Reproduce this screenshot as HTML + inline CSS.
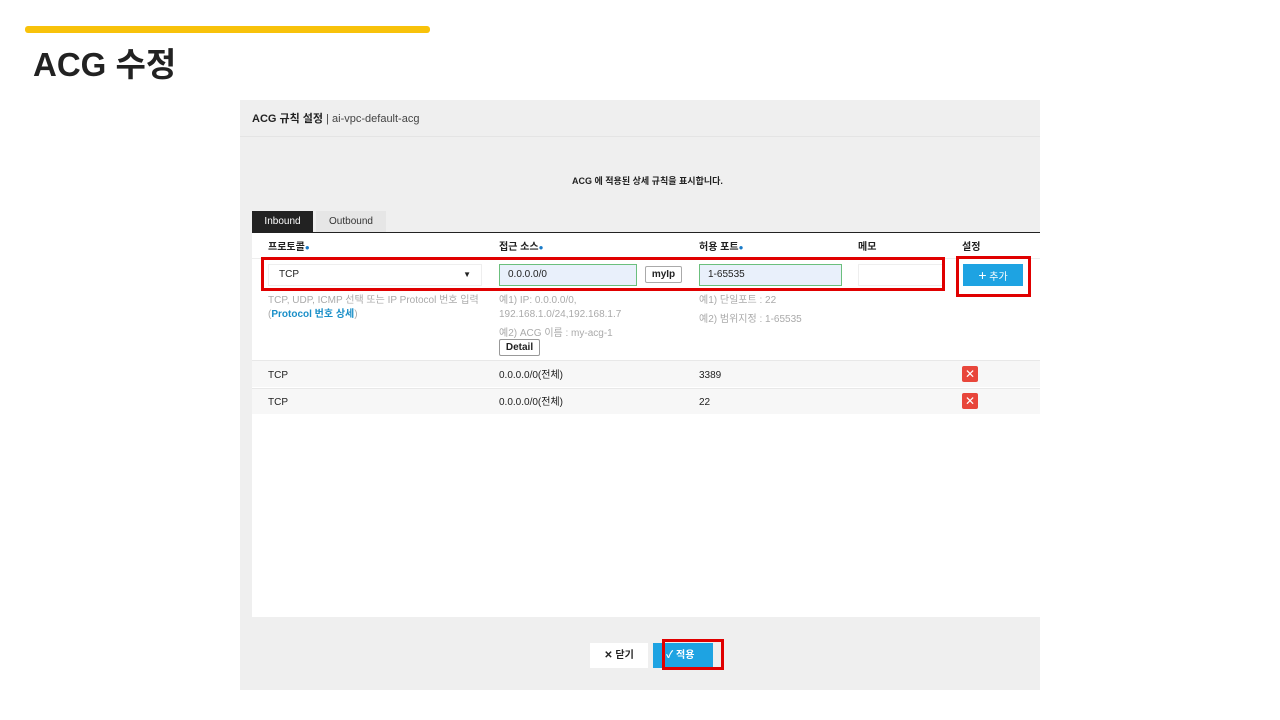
<!DOCTYPE html>
<html><head><meta charset="utf-8"><style>
*{margin:0;padding:0;box-sizing:border-box}
body{width:1280px;height:720px;background:#fff;position:relative;overflow:hidden;font-family:"Liberation Sans","Noto Sans CJK KR",sans-serif;color:#222}
.a{position:absolute}
.t{font-size:10px;white-space:nowrap;line-height:16px}
.g{color:#aaa;font-size:10px;white-space:nowrap;line-height:16px}
.s{transform:translateY(3px)}
.red{border:3px solid #e00000}
.inp{background:#e9f0fb;border:1px solid #6bbf7d;font-size:10px;padding-left:8px;line-height:20px}
.x{width:16px;height:16px;background:#e8463b;border-radius:2px;color:#fff;font-size:12px;line-height:16px;text-align:center}
.dot{color:#1a7bc8;font-size:8px;vertical-align:top}
</style></head><body>
<div class="a" style="left:25px;top:26px;width:405px;height:7px;background:#f8c20a;border-radius:3px"></div>
<div class="a" style="left:33px;top:45px;font-size:33px;font-weight:bold;line-height:40px">ACG 수정</div>

<div class="a" style="left:240px;top:100px;width:800px;height:590px;background:#efefef"></div>
<div class="a" style="left:240px;top:136px;width:800px;height:1px;background:#e4e4e4"></div>
<div class="a t s" style="left:252px;top:108px;font-size:11px"><b>ACG 규칙 설정</b> <span style="color:#444">| ai-vpc-default-acg</span></div>
<div class="a t s" style="left:572px;top:170px;font-weight:bold;font-size:9px">ACG 에 적용된 상세 규칙을 표시합니다.</div>

<div class="a t" style="left:252px;top:211px;width:61px;height:22px;background:#222;color:#fff;text-align:center;line-height:21px">Inbound</div>
<div class="a t" style="left:316px;top:211px;width:70px;height:22px;background:#e6e6e6;color:#333;text-align:center;line-height:21px">Outbound</div>
<div class="a" style="left:252px;top:232px;width:788px;height:385px;background:#fff;border-top:1px solid #222"></div>

<div class="a t s" style="left:268px;top:237px;font-weight:bold">프로토콜<span class="dot">●</span></div>
<div class="a t s" style="left:499px;top:237px;font-weight:bold">접근 소스<span class="dot">●</span></div>
<div class="a t s" style="left:699px;top:237px;font-weight:bold">허용 포트<span class="dot">●</span></div>
<div class="a t s" style="left:858px;top:237px;font-weight:bold">메모</div>
<div class="a t s" style="left:962px;top:237px;font-weight:bold">설정</div>
<div class="a" style="left:252px;top:258px;width:788px;height:1px;background:#eee"></div>

<div class="a t" style="left:268px;top:264px;width:214px;height:22px;border:1px solid #eee;line-height:20px;padding-left:10px">TCP<span style="position:absolute;right:10px;font-size:8px">▼</span></div>
<div class="a inp" style="left:499px;top:264px;width:138px;height:22px">0.0.0.0/0</div>
<div class="a t" style="left:645px;top:266px;width:37px;height:17px;border:1px solid #aaa;border-radius:2px;text-align:center;line-height:15px;font-weight:bold">myIp</div>
<div class="a inp" style="left:699px;top:264px;width:143px;height:22px">1-65535</div>
<div class="a" style="left:858px;top:264px;width:85px;height:22px;border:1px solid #eee"></div>
<div class="a t" style="left:963px;top:264px;width:60px;height:22px;background:#1ea3e2;color:#fff;text-align:center;line-height:22px"><span style="font-size:14px">+</span> 추가</div>
<div class="a red" style="left:261px;top:257px;width:684px;height:34px"></div>
<div class="a red" style="left:956px;top:256px;width:75px;height:41px"></div>

<div class="a g s" style="left:268px;top:290px">TCP, UDP, ICMP 선택 또는 IP Protocol 번호 입력</div>
<div class="a g s" style="left:268px;top:304px">(<span style="color:#1a8fc8;font-weight:bold">Protocol 번호 상세</span>)</div>
<div class="a g s" style="left:499px;top:290px">예1) IP: 0.0.0.0/0,</div>
<div class="a g s" style="left:499px;top:304px">192.168.1.0/24,192.168.1.7</div>
<div class="a g s" style="left:499px;top:323px">예2) ACG 이름 : my-acg-1</div>
<div class="a t" style="left:499px;top:339px;width:41px;height:17px;border:1px solid #999;border-radius:2px;text-align:center;line-height:15px;font-weight:bold">Detail</div>
<div class="a g s" style="left:699px;top:290px">예1) 단일포트 : 22</div>
<div class="a g s" style="left:699px;top:309px">예2) 범위지정 : 1-65535</div>

<div class="a" style="left:252px;top:360px;width:788px;height:27px;background:#f7f7f7;border-top:1px solid #e8e8e8"></div>
<div class="a" style="left:252px;top:388px;width:788px;height:26px;background:#f7f7f7;border-top:1px solid #e8e8e8"></div>
<div class="a t s" style="left:268px;top:365px">TCP</div>
<div class="a t s" style="left:499px;top:365px">0.0.0.0/0(전체)</div>
<div class="a t s" style="left:699px;top:365px">3389</div>
<div class="a x" style="left:962px;top:366px">✕</div>
<div class="a t s" style="left:268px;top:392px">TCP</div>
<div class="a t s" style="left:499px;top:392px">0.0.0.0/0(전체)</div>
<div class="a t s" style="left:699px;top:392px">22</div>
<div class="a x" style="left:962px;top:393px">✕</div>

<div class="a t" style="left:590px;top:643px;width:58px;height:25px;background:#fff;text-align:center;line-height:25px;font-weight:bold">✕ 닫기</div>
<div class="a t" style="left:653px;top:643px;width:60px;height:25px;background:#1ea3e2;color:#fff;text-align:left;padding-left:13px;line-height:25px;font-weight:bold">✓ 적용</div>
<div class="a red" style="left:662px;top:639px;width:62px;height:31px"></div>
</body></html>
